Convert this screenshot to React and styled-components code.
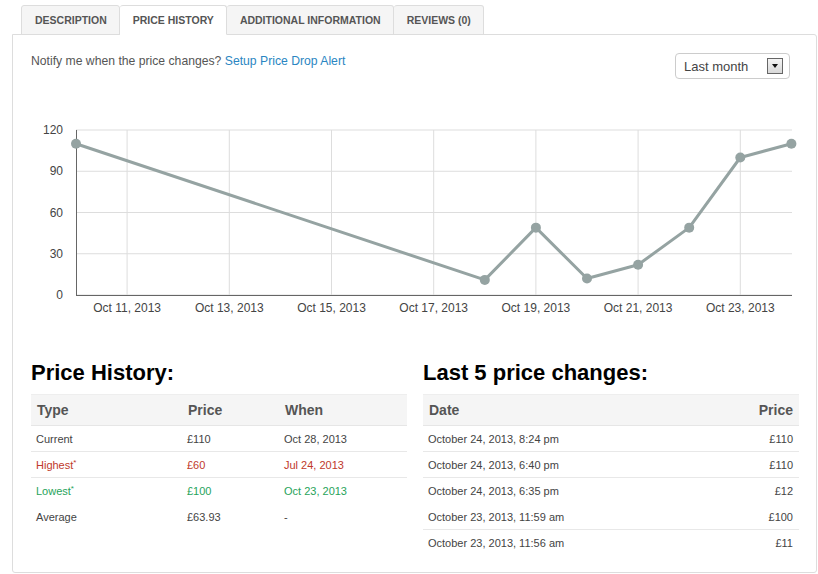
import React from 'react';
import styled, { createGlobalStyle } from 'styled-components';

const GlobalStyle = createGlobalStyle`
  body {
    margin: 0;
    background: #fff;
    font-family: "Liberation Sans", Arial, sans-serif;
    color: #444;
  }
`;

const Page = styled.div`
  padding: 5px 1px 3px 12px;
`;

const TabBar = styled.div`
  display: flex;
  padding-left: 9px;
  margin-bottom: -1px;
  position: relative;
`;

const Tab = styled.div`
  height: 28px;
  padding: 0 12px 0 13px;
  display: flex;
  align-items: center;
  font-size: 10.5px;
  font-weight: bold;
  text-transform: uppercase;
  color: #555;
  background: ${(p) => (p.$active ? '#fff' : '#f5f5f5')};
  border: 1px solid #ddd;
  border-bottom-color: ${(p) => (p.$active ? '#fff' : '#ddd')};
  border-left-width: ${(p) => (p.$first ? '1px' : '0')};
  border-radius: 3px 3px 0 0;
`;

const Panel = styled.div`
  border: 1px solid #ddd;
  border-radius: 0 3px 3px 3px;
  padding: 18px 17px 16px 18px;
`;

const TopRow = styled.div`
  display: flex;
  justify-content: space-between;
  align-items: flex-start;
`;

const Notice = styled.div`
  font-size: 12.2px;
  line-height: 16px;
  color: #555;
`;

const Link = styled.a`
  color: #2a86c2;
  text-decoration: none;
`;

const Select = styled.div`
  width: 99px;
  height: 24px;
  margin-right: 9px;
  border: 1px solid #ccc;
  border-radius: 4px;
  display: flex;
  align-items: center;
  justify-content: space-between;
  padding: 0 6px 0 8px;
  box-sizing: content-box;
  font-size: 13px;
  color: #444;
`;

const ArrowBox = styled.span`
  width: 14px;
  height: 14px;
  border: 1px solid #666;
  background: linear-gradient(#f4f4f4, #d8d8d8);
  display: flex;
  align-items: center;
  justify-content: center;
  &::after {
    content: '';
    border-left: 3px solid transparent;
    border-right: 3px solid transparent;
    border-top: 4px solid #111;
  }
`;

const ChartSvg = styled.svg`
  display: block;
  margin-top: 1px;
`;

const Columns = styled.div`
  display: grid;
  grid-template-columns: 1fr 1fr;
  column-gap: 16px;
  margin-top: 39px;
`;

const Heading = styled.h2`
  margin: 0 0 8px;
  font-size: 22px;
  line-height: 26px;
  font-weight: bold;
  color: #000;
`;

const Table = styled.table`
  width: 100%;
  border-collapse: collapse;
  table-layout: fixed;
`;

const Th = styled.th`
  height: 30px;
  padding: 0 6px;
  background: #f5f5f5;
  border-top: 1px solid #eee;
  border-bottom: 1px solid #e6e6e6;
  font-size: 14px;
  font-weight: bold;
  color: #555;
  text-align: ${(p) => p.$align || 'left'};
  width: ${(p) => p.$width || 'auto'};
`;

const Tr = styled.tr`
  border-bottom: 1px solid ${(p) => (p.$line ? '#e8e8e8' : 'transparent')};
`;

const Td = styled.td`
  height: 25px;
  padding: 0 6px 0 5px;
  font-size: 11px;
  color: ${(p) => p.$color || '#444'};
  text-align: ${(p) => p.$align || 'left'};
`;

const Star = styled.sup`
  font-size: 8px;
  vertical-align: 4px;
  line-height: 0;
`;

const days = [
  [0, 110],
  [8, 11],
  [9, 49],
  [10, 12],
  [11, 22],
  [12, 49],
  [13, 100],
  [14, 110],
];

const xFor = (d) => 45 + d * 51.1;
const yFor = (v) => 215 - v * 1.375;

function Chart() {
  const pts = days.map(([d, v]) => `${xFor(d)},${yFor(v)}`).join(' ');
  return (
    <ChartSvg width="770" height="241" viewBox="0 0 770 241">
      {[0, 30, 60, 90, 120].map((v) => (
        <g key={v}>
          <line x1="45" x2="761" y1={yFor(v)} y2={yFor(v)} stroke="#ddd" strokeWidth="1" />
          <text x="32" y={yFor(v) + 4} textAnchor="end" fontSize="12" fill="#444">
            {v}
          </text>
        </g>
      ))}
      {[1, 3, 5, 7, 9, 11, 13].map((d) => (
        <g key={d}>
          <line x1={xFor(d)} x2={xFor(d)} y1="50" y2="215" stroke="#ddd" strokeWidth="1" />
          <text x={xFor(d)} y="232" textAnchor="middle" fontSize="12" fill="#444">
            {`Oct ${10 + d}, 2013`}
          </text>
        </g>
      ))}
      <line x1="45.5" x2="45.5" y1="50" y2="215" stroke="#666" />
      <line x1="45" x2="761" y1="215.5" y2="215.5" stroke="#666" />
      <polyline points={pts} fill="none" stroke="#95a3a2" strokeWidth="3" strokeLinejoin="round" />
      {days.map(([d, v]) => (
        <circle key={d} cx={xFor(d)} cy={yFor(v)} r="5" fill="#95a3a2" />
      ))}
    </ChartSvg>
  );
}

const history = [
  { type: 'Current', price: '£110', when: 'Oct 28, 2013', line: true },
  { type: 'Highest', price: '£60', when: 'Jul 24, 2013', color: '#c0392b', star: true, line: true },
  { type: 'Lowest', price: '£100', when: 'Oct 23, 2013', color: '#27a35a', star: true },
  { type: 'Average', price: '£63.93', when: '-' },
];

const changes = [
  { date: 'October 24, 2013, 8:24 pm', price: '£110', line: true },
  { date: 'October 24, 2013, 6:40 pm', price: '£110', line: true },
  { date: 'October 24, 2013, 6:35 pm', price: '£12' },
  { date: 'October 23, 2013, 11:59 am', price: '£100', line: true },
  { date: 'October 23, 2013, 11:56 am', price: '£11' },
];

export default function App() {
  return (
    <Page>
      <GlobalStyle />
      <TabBar>
        <Tab $first>Description</Tab>
        <Tab $active>Price History</Tab>
        <Tab>Additional Information</Tab>
        <Tab>Reviews (0)</Tab>
      </TabBar>
      <Panel>
        <TopRow>
          <Notice>
            Notify me when the price changes? <Link href="#">Setup Price Drop Alert</Link>
          </Notice>
          <Select>
            Last month
            <ArrowBox />
          </Select>
        </TopRow>
        <Chart />
        <Columns>
          <div>
            <Heading>Price History:</Heading>
            <Table>
              <thead>
                <tr>
                  <Th $width="139px">Type</Th>
                  <Th $width="85px">Price</Th>
                  <Th>When</Th>
                </tr>
              </thead>
              <tbody>
                {history.map((r) => (
                  <Tr key={r.type} $line={r.line}>
                    <Td $color={r.color}>
                      {r.type}
                      {r.star && <Star>*</Star>}
                    </Td>
                    <Td $color={r.color}>{r.price}</Td>
                    <Td $color={r.color}>{r.when}</Td>
                  </Tr>
                ))}
              </tbody>
            </Table>
          </div>
          <div>
            <Heading>Last 5 price changes:</Heading>
            <Table>
              <thead>
                <tr>
                  <Th>Date</Th>
                  <Th $align="right">Price</Th>
                </tr>
              </thead>
              <tbody>
                {changes.map((r, i) => (
                  <Tr key={i} $line={r.line}>
                    <Td>{r.date}</Td>
                    <Td $align="right">{r.price}</Td>
                  </Tr>
                ))}
              </tbody>
            </Table>
          </div>
        </Columns>
      </Panel>
    </Page>
  );
}
